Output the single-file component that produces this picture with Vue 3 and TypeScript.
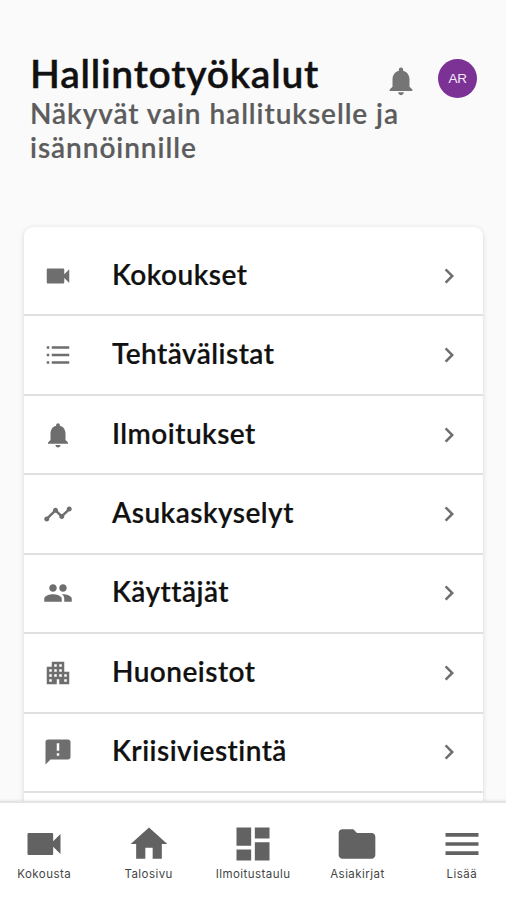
<script setup lang="ts">
interface Item {
  label: string
  icon: string
}

const icons: Record<string, string> = {
  video: 'M17 10.5V7c0-.55-.45-1-1-1H4c-.55 0-1 .45-1 1v10c0 .55.45 1 1 1h12c.55 0 1-.45 1-1v-3.5l4 4v-11l-4 4z',
  list: 'M3 5h2v2H3zM3 11h2v2H3zM3 17h2v2H3zM7 5h14v2H7zM7 11h14v2H7zM7 17h14v2H7z',
  bell: 'M12 22c1.1 0 2-.9 2-2h-4c0 1.1.89 2 2 2zm6-6v-5c0-3.07-1.64-5.64-4.5-6.32V4c0-.83-.67-1.5-1.5-1.5s-1.5.67-1.5 1.5v.68C7.63 5.36 6 7.92 6 11v5l-2 2v1h16v-1l-2-2z',
  timeline: 'M23 8c0 1.1-.9 2-2 2-.18 0-.35-.02-.51-.07l-3.56 3.55c.05.16.07.34.07.52 0 1.1-.9 2-2 2s-2-.9-2-2c0-.18.02-.36.07-.52l-2.55-2.55c-.16.05-.34.07-.52.07s-.36-.02-.52-.07l-4.55 4.56c.05.16.07.33.07.51 0 1.1-.9 2-2 2s-2-.9-2-2 .9-2 2-2c.18 0 .35.02.51.07l4.56-4.55C8.02 9.36 8 9.18 8 9c0-1.1.9-2 2-2s2 .9 2 2c0 .18-.02.36-.07.52l2.55 2.55c.16-.05.34-.07.52-.07s.36.02.52.07l3.55-3.56C19.02 8.35 19 8.18 19 8c0-1.1.9-2 2-2s2 .9 2 2z',
  people: 'M16 11c1.66 0 2.99-1.34 2.99-3S17.66 5 16 5c-1.66 0-3 1.34-3 3s1.34 3 3 3zm-8 0c1.66 0 2.99-1.34 2.99-3S9.66 5 8 5C6.34 5 5 6.34 5 8s1.34 3 3 3zm0 2c-2.33 0-7 1.17-7 3.5V19h14v-2.5c0-2.33-4.67-3.5-7-3.5zm8 0c-.29 0-.62.02-.97.05 1.16.84 1.97 1.97 1.97 3.45V19h6v-2.5c0-2.33-4.67-3.5-7-3.5z',
  apartment: 'M17 11V3H7v4H3v14h8v-4h2v4h8V11h-4zM7 19H5v-2h2v2zm0-4H5v-2h2v2zm0-4H5V9h2v2zm4 4H9v-2h2v2zm0-4H9V9h2v2zm0-4H9V5h2v2zm4 8h-2v-2h2v2zm0-4h-2V9h2v2zm0-4h-2V5h2v2zm4 12h-2v-2h2v2zm0-4h-2v-2h2v2z',
  announcement: 'M20 2H4c-1.1 0-1.99.9-1.99 2L2 22l4-4h14c1.1 0 2-.9 2-2V4c0-1.1-.9-2-2-2zm-7 9h-2V5h2v6zm0 4h-2v-2h2v2z',
  chevron: 'M10 6 8.59 7.41 13.17 12l-4.58 4.59L10 18l6-6z',
  camera: 'M17 10.5V6.6a.6.6 0 0 0-.6-.6H3.6a.6.6 0 0 0-.6.6v10.8a.6.6 0 0 0 .6.6h12.8a.6.6 0 0 0 .6-.6v-3.9l4 4v-11l-4 4z',
  home: 'M10 20v-6h4v6h5v-8h3L12 3 2 12h3v8z',
  dashboard: 'M3 13h8V3H3v10zm0 8h8v-6H3v6zm10 0h8V11h-8v10zm0-18v6h8V3h-8z',
  folder: 'M10 4H4c-1.1 0-1.99.9-1.99 2L2 18c0 1.1.9 2 2 2h16c1.1 0 2-.9 2-2V8c0-1.1-.9-2-2-2h-8l-2-2z',
  menu: 'M3 18h18v-2H3v2zm0-5h18v-2H3v2zm0-7v2h18V6H3z',
}

const tools: Item[] = [
  { label: 'Kokoukset', icon: 'video' },
  { label: 'Tehtävälistat', icon: 'list' },
  { label: 'Ilmoitukset', icon: 'bell' },
  { label: 'Asukaskyselyt', icon: 'timeline' },
  { label: 'Käyttäjät', icon: 'people' },
  { label: 'Huoneistot', icon: 'apartment' },
  { label: 'Kriisiviestintä', icon: 'announcement' },
]

const tabs: Item[] = [
  { label: 'Kokousta', icon: 'camera' },
  { label: 'Talosivu', icon: 'home' },
  { label: 'Ilmoitustaulu', icon: 'dashboard' },
  { label: 'Asiakirjat', icon: 'folder' },
  { label: 'Lisää', icon: 'menu' },
]
</script>

<template>
  <div class="screen">
    <main class="content">
      <header class="header">
        <div class="titles">
          <h1 class="title">Hallintotyökalut</h1>
          <p class="subtitle">Näkyvät vain hallitukselle ja isännöinnille</p>
        </div>
        <div class="actions">
          <svg class="bell" viewBox="0 0 24 24"><path :d="icons.bell" /></svg>
          <span class="avatar">AR</span>
        </div>
      </header>
      <ul class="card">
        <li v-for="tool in tools" :key="tool.label" class="row">
          <svg class="row-icon" viewBox="0 0 24 24"><path :d="icons[tool.icon]" /></svg>
          <span class="row-label">{{ tool.label }}</span>
          <svg class="row-icon chevron" viewBox="0 0 24 24"><path :d="icons.chevron" /></svg>
        </li>
      </ul>
    </main>
    <nav class="tabbar">
      <a v-for="tab in tabs" :key="tab.label" class="tab">
        <svg class="tab-icon" viewBox="0 0 24 24"><path :d="icons[tab.icon]" /></svg>
        <span class="tab-label">{{ tab.label }}</span>
      </a>
    </nav>
  </div>
</template>

<style>
body {
  margin: 0;
  background: #fafafa;
}
</style>

<style scoped>
.screen {
  display: flex;
  flex-direction: column;
  height: 900px;
  overflow: hidden;
  background: #fafafa;
  font-family: Lato, "Liberation Sans", sans-serif;
  font-variant-ligatures: none;
  color: #111;
}
.content {
  flex: 1;
  min-height: 0;
  overflow: hidden;
}
.header {
  display: flex;
  justify-content: space-between;
  box-sizing: border-box;
  height: 227px;
  padding: 50px 29px 0 30px;
}
.titles {
  width: 350px;
}
.title {
  margin: 0;
  font-size: 39px;
  line-height: 46px;
  font-weight: 600;
  letter-spacing: 0.75px;
  -webkit-text-stroke: 0.4px currentColor;
}
.subtitle {
  margin: 0;
  width: 380px;
  font-size: 28px;
  line-height: 34px;
  font-weight: 600;
  letter-spacing: 0.95px;
  color: #5c5c5c;
  -webkit-text-stroke: 0.2px currentColor;
}
.actions {
  display: flex;
  align-items: flex-start;
  gap: 20px;
  padding-top: 9px;
}
.bell {
  width: 34px;
  height: 34px;
  margin-top: 5px;
  fill: #757575;
}
.avatar {
  display: flex;
  align-items: center;
  justify-content: center;
  width: 39px;
  height: 39px;
  border-radius: 50%;
  background: #7b3294;
  color: #f6e9fa;
  font: 13.5px "Liberation Sans", sans-serif;
  letter-spacing: -0.3px;
}
.card {
  margin: 0 23px 0 24px;
  padding: 10px 0 0;
  list-style: none;
  height: 700px;
  background: #fff;
  border-radius: 9px;
  box-shadow: 0 1px 5px rgba(0, 0, 0, 0.15);
}
.row {
  display: flex;
  align-items: center;
  box-sizing: border-box;
  height: 79.45px;
  padding: 0 19px;
  border-bottom: 2px solid #e0e0e0;
}
.row-icon {
  flex: none;
  width: 30px;
  height: 30px;
  fill: #6e6e6e;
}
.row-label {
  flex: 1;
  margin-left: 39px;
  padding-bottom: 4px;
  font-size: 28px;
  line-height: 34px;
  font-weight: 600;
  letter-spacing: 0.47px;
  -webkit-text-stroke: 0.2px currentColor;
}
.tabbar {
  position: relative;
  display: flex;
  justify-content: space-between;
  box-sizing: border-box;
  height: 99px;
  padding: 19px 0 0;
  margin: 0 -8px;
  background: #fff;
  border-top: 2px solid #e4e4e4;
  box-shadow: 0 0 3px rgba(0, 0, 0, 0.12);
}
.tab {
  flex: 1;
  display: flex;
  flex-direction: column;
  align-items: center;
}
.tab-icon {
  width: 44px;
  height: 44px;
  fill: #626262;
}
.tab-label {
  font-family: Inter, sans-serif;
  font-size: 11.5px;
  line-height: 16px;
  letter-spacing: 0.45px;
  color: #444;
}
</style>
